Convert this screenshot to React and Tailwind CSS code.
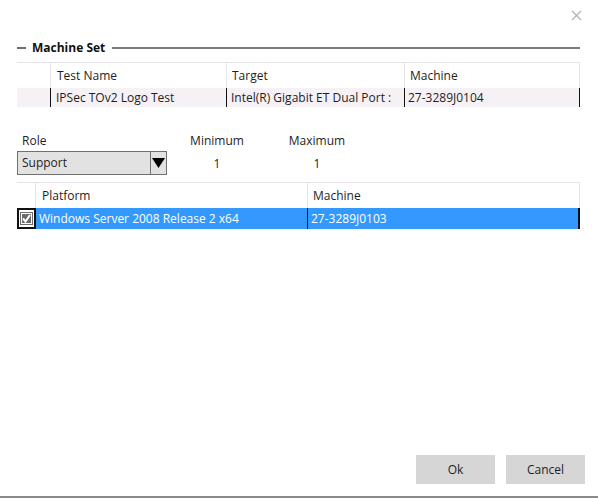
import React from 'react';

const font = { fontFamily: '"Segoe UI", "Open Sans", "Liberation Sans", sans-serif' };

const App = () => {
  return (
    <div className="relative w-[598px] h-[498px] bg-white flex flex-col border-b-2 border-[#8a8a8a] text-[12px] text-[#1e1e1e]" style={font}>
      {/* close */}
      <svg className="absolute right-[16px] top-[10px]" width="11" height="11" viewBox="0 0 11 11">
        <path d="M1 1 L10 10 M10 1 L1 10" stroke="#b4b4b4" strokeWidth="1.4" />
      </svg>

      <div className="flex flex-col pl-[17px] pr-[18px] pt-[40px]">
        {/* group header */}
        <div className="flex items-center h-[16px]">
          <div className="w-[9px] h-[2px] bg-[#6e6e6e]" />
          <span className="ml-[6px] font-bold text-[12px] text-[#111]">Machine Set</span>
          <div className="ml-[7px] flex-1 h-[2px] bg-[#7c7c7c]" />
        </div>

        {/* table 1 */}
        <div className="mt-[6px] flex flex-col border-t border-[#e6e4ea]">
          <div className="flex h-[25px] items-center">
            <div className="w-[34px] h-full border-r border-[#e6e4ea]" />
            <div className="w-[176px] h-full border-r border-[#e6e4ea] flex items-center pl-[6px]">Test Name</div>
            <div className="w-[178px] h-full border-r border-[#e6e4ea] flex items-center pl-[5px]">Target</div>
            <div className="flex-1 h-full border-r border-[#e6e4ea] flex items-center pl-[5px]">Machine</div>
          </div>
          <div className="flex h-[19px] bg-[#f6f1f4]">
            <div className="w-[34px] h-full border-r border-[#111]" />
            <div className="w-[176px] h-full border-r border-[#111] flex items-center pl-[5px] whitespace-nowrap">IPSec TOv2 Logo Test</div>
            <div className="w-[178px] h-full border-r border-[#111] flex items-center pl-[4px] whitespace-nowrap">Intel(R) Gigabit ET Dual Port :</div>
            <div className="flex-1 h-full border-r border-[#111] flex items-center pl-[3px] whitespace-nowrap">27-3289J0104</div>
          </div>
        </div>

        {/* role row */}
        <div className="mt-[26px] flex items-start">
          <div className="flex flex-col w-[150px]">
            <span className="pl-[5px] h-[15px] leading-[15px]">Role</span>
            <div className="mt-[3px] flex h-[24px] border border-[#707070] bg-[#e2e2e2]">
              <div className="flex-1 flex items-center pl-[4px]">Support</div>
              <div className="w-[16px] border-l border-[#707070] flex items-center justify-center">
                <svg width="13" height="12" viewBox="0 0 13 12">
                  <path d="M0 1 L13 1 L6.5 11 Z" fill="#000" />
                </svg>
              </div>
            </div>
          </div>
          <div className="ml-[25px] flex flex-col items-center w-[50px]">
            <span className="h-[15px] leading-[15px]">Minimum</span>
            <span className="mt-[8px] h-[15px] leading-[15px]">1</span>
          </div>
          <div className="ml-[49px] flex flex-col items-center w-[52px]">
            <span className="h-[15px] leading-[15px]">Maximum</span>
            <span className="mt-[8px] h-[15px] leading-[15px]">1</span>
          </div>
        </div>

        {/* table 2 */}
        <div className="mt-[7px] flex flex-col border-t border-[#e6e4ea]">
          <div className="flex h-[25px]">
            <div className="w-[19px] h-full border-r border-[#e6e4ea]" />
            <div className="w-[272px] h-full border-r border-[#e6e4ea] flex items-center pl-[6px]">Platform</div>
            <div className="flex-1 h-full border-r border-[#e6e4ea] flex items-center pl-[5px]">Machine</div>
          </div>
          <div className="flex h-[21px] bg-[#3399ff] text-white">
            <div className="w-[19px] h-full border-2 border-[#111] bg-white flex items-center justify-center">
              <svg width="13" height="13" viewBox="0 0 13 13">
                <rect x="0" y="0" width="13" height="13" fill="#6a6a6a" />
                <rect x="1.5" y="1.5" width="10" height="10" fill="none" stroke="#fff" strokeWidth="1" />
                <path d="M3 6.5 L5.5 9.5 L10 3" fill="none" stroke="#fff" strokeWidth="2" />
              </svg>
            </div>
            <div className="w-[272px] h-full border-r border-[#111] flex items-center pl-[3px] whitespace-nowrap">Windows Server 2008 Release 2 x64</div>
            <div className="flex-1 h-full border-r-2 border-[#111] flex items-center pl-[3px]">27-3289J0103</div>
          </div>
        </div>
      </div>

      <div className="flex-1" />

      {/* buttons */}
      <div className="flex justify-end gap-[11px] pr-[13px] mb-[12px]">
        <button className="w-[79px] h-[29px] bg-[#d6d6d6] text-[#1e1e1e]">Ok</button>
        <button className="w-[79px] h-[29px] bg-[#d6d6d6] text-[#1e1e1e]">Cancel</button>
      </div>
    </div>
  );
};

export default App;
